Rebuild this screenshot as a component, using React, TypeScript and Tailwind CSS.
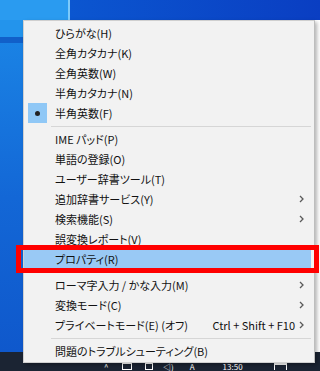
import React from 'react';

type MenuEntry =
    | { kind: 'sep' }
    | { kind: 'item'; label: string; checked?: boolean; submenu?: boolean; shortcut?: string; active?: boolean };

const entries: MenuEntry[] = [
    { kind: 'item', label: 'ひらがな(H)' },
    { kind: 'item', label: '全角カタカナ(K)' },
    { kind: 'item', label: '全角英数(W)' },
    { kind: 'item', label: '半角カタカナ(N)' },
    { kind: 'item', label: '半角英数(F)', checked: true },
    { kind: 'sep' },
    { kind: 'item', label: 'IME パッド(P)' },
    { kind: 'item', label: '単語の登録(O)' },
    { kind: 'item', label: 'ユーザー辞書ツール(T)' },
    { kind: 'item', label: '追加辞書サービス(Y)', submenu: true },
    { kind: 'item', label: '検索機能(S)', submenu: true },
    { kind: 'item', label: '誤変換レポート(V)' },
    { kind: 'item', label: 'プロパティ(R)', active: true },
    { kind: 'sep' },
    { kind: 'item', label: 'ローマ字入力 / かな入力(M)', submenu: true },
    { kind: 'item', label: '変換モード(C)', submenu: true },
    { kind: 'item', label: 'プライベートモード(E) (オフ)', shortcut: 'Ctrl + Shift + F10', submenu: true },
    { kind: 'sep' },
    { kind: 'item', label: '問題のトラブルシューティング(B)' },
];

const Chevron = () => (
    <svg width="5" height="8" viewBox="0 0 5 8" fill="none">
        <path d="M1 1l3 3-3 3" stroke="#5a5a5a" strokeWidth="1.3" />
    </svg>
);

const App = () => {
    return (
        <div className="relative w-[320px] h-[371px] overflow-hidden flex flex-col bg-[#1466d4] font-['Noto_Sans_CJK_JP','Noto_Sans',sans-serif] [font-feature-settings:'palt']">
            {/* desktop wallpaper */}
            <div className="flex h-[20px]">
                <div className="w-[68px] bg-[#2a9bf0]"></div>
                <div className="w-[2px] bg-[#7ccafa]"></div>
                <div className="flex-1 bg-[linear-gradient(90deg,#0b56d0,#0a3ec2)]"></div>
            </div>
            <div className="flex flex-1">
                <div className="w-[23px] flex flex-col">
                    <div className="h-[17px] bg-[#2394ec]"></div>
                    <div className="h-[6px] bg-[#1160c9]"></div>
                    <div className="flex-1 bg-[linear-gradient(180deg,#1a82e4,#1367d6_50%,#0f58cc)]"></div>
                </div>
                <div className="flex-1"></div>
                <div className="w-[5px] bg-white"></div>
            </div>
            {/* taskbar, mostly hidden behind the menu */}
            <div className="h-[19px] bg-[#1b2433] flex items-start pt-[11px] text-white text-[8px] leading-[8px]">
                <span className="ml-[104px] w-[8px]">^</span>
                <span className="ml-[10px] w-[10px] h-[7px] border border-white"></span>
                <span className="ml-[13px] w-[8px] h-[7px] border border-white"></span>
                <span className="ml-[10px]">◁)</span>
                <span className="ml-[16px]">A</span>
                <span className="ml-[28px]">13:50</span>
                <span className="ml-[31px] w-[13px] h-[7px] border-t-2 border-x border-white"></span>
            </div>

            {/* IME context menu */}
            <div className="absolute left-[23px] top-[20px] w-[292px] h-[343px] bg-[#f2f2f2] border border-[#cfcfcf] border-r-[#bdbdbd] shadow-[2px_2px_4px_rgba(0,0,0,0.3)] pt-[2px] pr-[3px] text-[11px] text-[#111]">
                {entries.map((entry, i) =>
                    entry.kind === 'sep' ? (
                        <div key={i} className="h-[6px] flex items-center pl-[27px]">
                            <div className="h-px flex-1 bg-[#d6d6d6]"></div>
                        </div>
                    ) : (
                        <div
                            key={i}
                            className={`h-[20px] flex items-center ${entry.active ? 'bg-[#99c9f5]' : ''}`}
                        >
                            <div className="w-[22px] h-[20px] ml-[2px] flex items-center justify-center">
                                {entry.checked && (
                                    <div className="w-[19px] h-[20px] bg-[#90c8f6] flex items-center justify-center">
                                        <div className="w-[5px] h-[5px] rounded-full bg-[#222]"></div>
                                    </div>
                                )}
                            </div>
                            <span className="ml-[7px] whitespace-nowrap">{entry.label}</span>
                            <div className="flex-1"></div>
                            {entry.shortcut && <span className="mr-[4px] whitespace-nowrap">{entry.shortcut}</span>}
                            <div className="w-[12px] flex items-center">{entry.submenu && <Chevron />}</div>
                        </div>
                    )
                )}
            </div>

            {/* red annotation frame */}
            <div className="absolute left-[16px] top-[245px] w-[303px] h-[28px] border-[5px] border-[#ff0000]"></div>
        </div>
    );
};

export default App;
